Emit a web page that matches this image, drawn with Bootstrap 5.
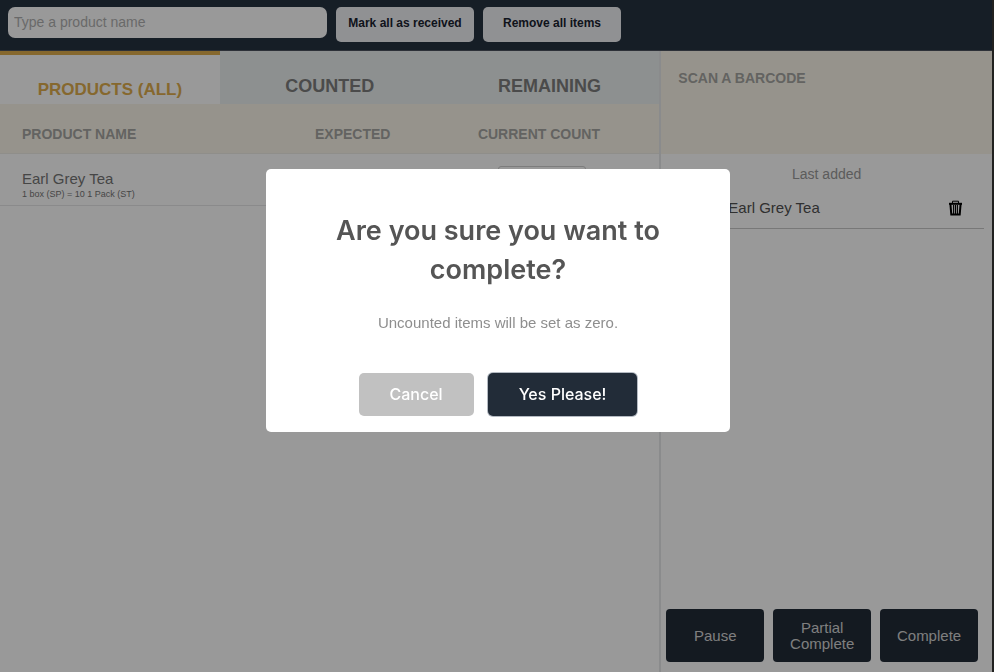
<!DOCTYPE html>
<html lang="en">
<head>
<meta charset="utf-8">
<meta name="viewport" content="width=device-width, initial-scale=1">
<title>Stock count</title>
<link href="https://cdn.jsdelivr.net/npm/bootstrap@5.3.0/dist/css/bootstrap.min.css" rel="stylesheet">
<style>
  :root { --ink: #222c38; --cream: #faf6ea; --line: #e6e6e8; }
  body { font-family: "Liberation Sans", Arial, sans-serif; font-size: 15px; line-height: 16px; color: #6b6b6b; }
  .app { border-right: 2px solid #3a3a36; min-height: 100vh; }
  .topbar { background: #263240; border-bottom: 1px solid #4c535e; padding: 7px 8px 8px; gap: 9px; }
  .search { width: 319px; height: 31px; padding: 0 6px 2px; border: 0; border-radius: 7px; font-size: 14px; }
  .search::placeholder { color: #b0b0b0; }
  .btn-top { width: 138px; height: 35px; padding: 0 0 4px; border: 0; border-radius: 5px; background: #f0f2f5; color: #1a2230; font-size: 12px; font-weight: 700; }
  .left-pane { border-right: 2px solid #e6e8e9; }
  .tab-strip { height: 53px; background: #ecf1f0; }
  .tab-strip .nav-link { border-radius: 0; padding: 17px 0 0; color: #7d7d7d; font-size: 18px; font-weight: 700; line-height: 36px; height: 53px; }
  .tab-strip .nav-link.active { background: #fff; color: #e0ad4d; border-top: 4px solid #e0ad4d; font-size: 17px; }
  .counts { table-layout: fixed; }
  .counts th { height: 49px; padding: 12px 0 0; background: var(--cream); color: #a6a5a2; font-size: 14px; border-bottom: 1px solid #efede6; vertical-align: middle; }
  .counts td { height: 52px; padding: 10px 0 0; border-bottom: 1px solid var(--line); background: #fff; color: #757575; }
  .counts th:first-child, .counts td:first-child { width: 42%; padding-left: 22px; }
  .counts th:nth-child(2) { width: 23%; }
  .counts th:last-child { padding-right: 10px; }
  .counts td:last-child { padding: 12px 4px 0 0; }
  .unit-note { font-size: 9px; line-height: 15px; }
  .qty { width: 88px; height: 28px; border: 1px solid #cfcfcf; border-radius: 3px; }
  .scan { height: 103px; padding: 18px 17px; background: var(--cream); color: #a6a5a2; font-size: 14px; font-weight: 700; line-height: 18px; }
  .last-added { padding-top: 12px; font-size: 14px; color: #999; }
  .added-item { margin: 8px 8px 0 8px; padding: 10px 21px 12px 59px; border-bottom: 1px solid #c9c9c9; color: #505050; }
  .actions { padding: 10px 14px 10px 5px; gap: 9px; }
  .btn-act { flex: 1 1 0; height: 53px; padding: 0; border: 0; border-radius: 4px; background: var(--ink); color: #d4d4d4; font-size: 15px; line-height: 16px; }
  .veil { background: rgba(0, 0, 0, .4); padding-left: 2px; }
  .confirm { max-width: 464px; margin: 17vw auto; }
  .confirm .modal-content { border: 0; border-radius: 5px; padding: 42px 40px 16px; }
  .confirm h2 { margin: 0; font-family: Inter, sans-serif; font-size: 27px; font-weight: 600; line-height: 39px; color: #555; }
  .confirm p { margin: 25px 0 41px; color: #8e8e8e; line-height: 18px; }
  .choices { gap: 14px; }
  .btn-ask { height: 43px; padding: 0 31px; border: 0; border-radius: 5px; color: #fff; font-family: Inter, sans-serif; font-size: 16px; font-weight: 500; }
  .btn-cancel { background: #c1c1c1; }
  .btn-yes { background: var(--ink); box-shadow: 0 0 0 1px #b4bac2; }
</style>
<script src="https://cdn.jsdelivr.net/npm/bootstrap@5.3.0/dist/js/bootstrap.bundle.min.js"></script>
</head>
<body>
<div class="app d-flex flex-column">
  <header class="topbar d-flex align-items-start">
    <input class="form-control search" type="text" placeholder="Type a product name" aria-label="Product name">
    <button class="btn btn-top" type="button">Mark all as received</button>
    <button class="btn btn-top" type="button">Remove all items</button>
  </header>
  <main class="row g-0 flex-grow-1">
    <section class="col-8 left-pane">
      <nav class="nav nav-pills nav-justified tab-strip">
        <a class="nav-link active" href="#all">PRODUCTS (ALL)</a>
        <a class="nav-link" href="#counted">COUNTED</a>
        <a class="nav-link" href="#remaining">REMAINING</a>
      </nav>
      <table class="counts w-100">
        <thead>
          <tr><th scope="col">PRODUCT NAME</th><th scope="col" class="text-center">EXPECTED</th><th scope="col" class="text-center">CURRENT COUNT</th></tr>
        </thead>
        <tbody>
          <tr>
            <td><div class="pt-1">Earl Grey Tea</div><div class="unit-note">1 box (SP) = 10 1 Pack (ST)</div></td>
            <td></td>
            <td class="text-center align-top"><input class="qty" type="text" aria-label="Current count"></td>
          </tr>
        </tbody>
      </table>
    </section>
    <aside class="col-4 d-flex flex-column">
      <div class="scan">SCAN A BARCODE</div>
      <div class="last-added text-center">Last added</div>
      <div class="added-item d-flex justify-content-between align-items-center">
        <span>Earl Grey Tea</span>
        <button class="btn p-0 border-0 lh-1" type="button" aria-label="Delete">
          <svg class="d-block" width="15" height="16" viewBox="0 0 15 16" fill="none" stroke="#000">
            <path d="M4.5 3V1.2h6V3" stroke-width="1"/>
            <path d="M1 3.8h13" stroke-width="2"/>
            <path d="M2.4 4l.9 10.4h8.4L12.6 4" stroke-width="2"/>
            <path d="M5.6 5v9M7.5 5v9M9.4 5v9" stroke-width="1.1"/>
          </svg>
        </button>
      </div>
      <div class="actions d-flex mt-auto">
        <button class="btn btn-act" type="button">Pause</button>
        <button class="btn btn-act" type="button">Partial<br>Complete</button>
        <button class="btn btn-act" type="button">Complete</button>
      </div>
    </aside>
  </main>
</div>

<div class="modal veil d-block" role="dialog" aria-modal="true" aria-labelledby="ask-title">
  <div class="modal-dialog confirm">
    <div class="modal-content text-center">
      <h2 id="ask-title">Are you sure you want to complete?</h2>
      <p>Uncounted items will be set as zero.</p>
      <div class="choices d-flex justify-content-center">
        <button class="btn btn-ask btn-cancel" type="button">Cancel</button>
        <button class="btn btn-ask btn-yes" type="button">Yes Please!</button>
      </div>
    </div>
  </div>
</div>
</body>
</html>
